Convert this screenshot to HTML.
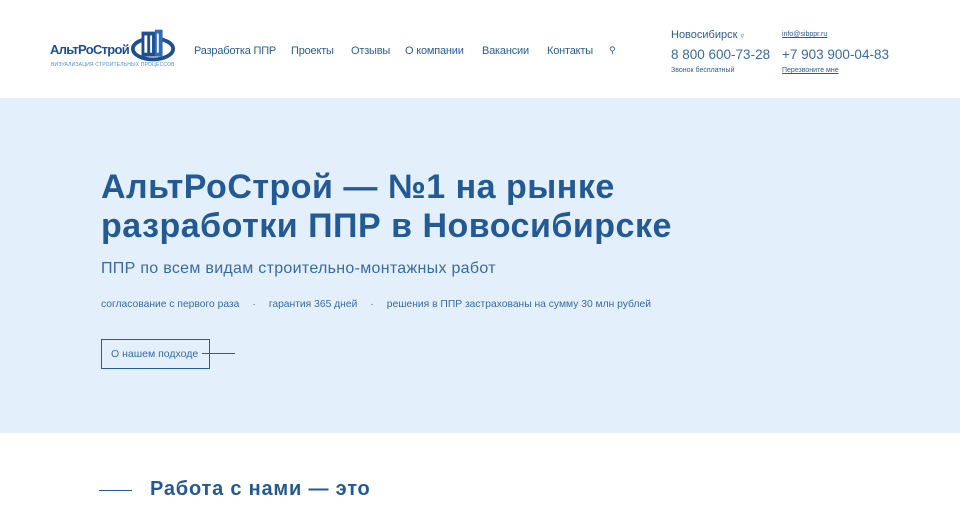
<!DOCTYPE html>
<html><head><meta charset="utf-8"><style>
*{margin:0;padding:0;box-sizing:border-box}
body{width:960px;height:528px;overflow:hidden;background:#fff;font-family:"Liberation Sans","DejaVu Sans",sans-serif;color:#2b5d94;position:relative}
.a{position:absolute;white-space:nowrap}
header{position:absolute;left:0;top:0;width:960px;height:98px;background:#fff}
.nav{font-size:11px;color:#2b5d94;top:45px;letter-spacing:-0.2px}
.hero{position:absolute;left:0;top:98px;width:960px;height:335px;background:#e3f0fc}
h1{position:absolute;left:101px;top:168px;font-size:34px;line-height:39px;font-weight:bold;color:#245a94;letter-spacing:0.5px}
</style></head><body>
<header>
<div class="a" style="left:50px;top:42px;font-size:13px;font-weight:bold;color:#1f4f8f;letter-spacing:-0.7px">АльтРоСтрой</div>
<svg class="a" style="left:130px;top:27px" width="46" height="38" viewBox="0 0 48 38">
<ellipse cx="24" cy="22" rx="21" ry="11" fill="none" stroke="#1f4f8f" stroke-width="4"/>
<rect x="12" y="4" width="20" height="26" fill="#1f4f8f"/>
<rect x="26" y="2" width="8" height="28" fill="#2e6db4"/>
<g fill="#fff"><rect x="15" y="8" width="3" height="18"/><rect x="21" y="8" width="2" height="18"/><rect x="28" y="6" width="2" height="20"/></g>
</svg>
<div class="a" style="left:51px;top:62px;font-size:5px;color:#4a8fd6;letter-spacing:0.2px">ВИЗУАЛИЗАЦИЯ СТРОИТЕЛЬНЫХ ПРОЦЕССОВ</div>
<div class="a nav" style="left:194px">Разработка ППР</div>
<div class="a nav" style="left:291px">Проекты</div>
<div class="a nav" style="left:351px">Отзывы</div>
<div class="a nav" style="left:405px">О компании</div>
<div class="a nav" style="left:482px">Вакансии</div>
<div class="a nav" style="left:547px">Контакты</div>
<div class="a" style="left:609px;top:45px;font-size:9px">&#9906;</div>
<div class="a" style="left:671px;top:29px;font-size:11px">Новосибирск <span style="font-size:7px">▿</span></div>
<div class="a" style="left:782px;top:31px;font-size:7px;text-decoration:underline">info@sibppr.ru</div>
<div class="a" style="left:671px;top:47px;font-size:13.5px;color:#3a6aa3">8 800 600-73-28</div>
<div class="a" style="left:782px;top:47px;font-size:13.5px;color:#3a6aa3">+7 903 900-04-83</div>
<div class="a" style="left:671px;top:67px;font-size:7px">Звонок бесплатный</div>
<div class="a" style="left:782px;top:67px;font-size:7px;text-decoration:underline">Перезвоните мне</div>
</header>
<div class="hero"></div>
<h1>АльтРоСтрой — №1 на рынке<br>разработки ППР в Новосибирске</h1>
<div class="a" style="left:101px;top:260px;font-size:16px;color:#3a6aa3;letter-spacing:0.3px">ППР по всем видам строительно-монтажных работ</div>
<div class="a" style="left:101px;top:299px;font-size:10.3px;color:#3a6aa3">согласование с первого раза<span style="margin:0 13px">·</span>гарантия 365 дней<span style="margin:0 13px">·</span>решения в ППР застрахованы на сумму 30 млн рублей</div>
<div class="a" style="left:101px;top:339px;width:109px;height:30px;border:1px solid #2b5d94"></div>
<div class="a" style="left:111px;top:348px;font-size:10.5px;color:#3a6aa3">О нашем подходе</div>
<div class="a" style="left:202px;top:353px;width:33px;height:1px;background:#2b5d94"></div>
<div class="a" style="left:99px;top:490px;width:33px;height:1px;background:#2b5d94"></div>
<div class="a" style="left:150px;top:478px;font-size:20px;font-weight:bold;color:#245a94;letter-spacing:0.8px">Работа с нами — это</div>
</body></html>
